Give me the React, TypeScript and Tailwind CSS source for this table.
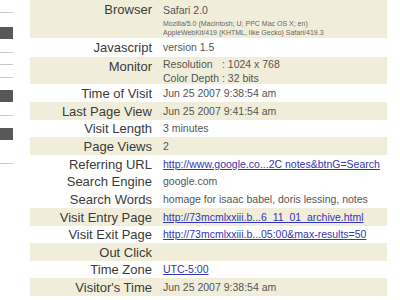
import React from "react";

type Item = {
  label: string;
  beige?: boolean;
  h: string;
  multi?: boolean;
  value: React.ReactNode;
};

const link = "text-[#3434b4] underline";

const rows: Item[] = [
  {
    label: "Browser",
    beige: true,
    h: "h-[38px]",
    multi: true,
    value: (
      <div className="pt-[4px]">
        <div className="text-[10.5px] leading-[13px]">Safari 2.0</div>
        <div className="mt-[2px] whitespace-nowrap text-[7px] leading-[9px] text-[#666]">
          <div>Mozilla/5.0 (Macintosh; U; PPC Mac OS X; en)</div>
          <div>AppleWebKit/419 (KHTML, like Gecko) Safari/419.3</div>
        </div>
      </div>
    ),
  },
  { label: "Javascript", h: "h-[19px]", value: "version 1.5" },
  {
    label: "Monitor",
    beige: true,
    h: "h-[27px]",
    multi: true,
    value: (
      <div className="whitespace-nowrap text-[10.5px] leading-[14px]">
        <div className="flex">
          <span className="w-[59px] shrink-0 whitespace-nowrap">Resolution</span>
          <span>: 1024 x 768</span>
        </div>
        <div className="flex">
          <span className="w-[59px] shrink-0 whitespace-nowrap">Color Depth</span>
          <span>: 32 bits</span>
        </div>
      </div>
    ),
  },
  { label: "Time of Visit", h: "h-[18px]", value: "Jun 25 2007 9:38:54 am" },
  { label: "Last Page View", beige: true, h: "h-[18px]", value: "Jun 25 2007 9:41:54 am" },
  { label: "Visit Length", h: "h-[17px]", value: "3 minutes" },
  { label: "Page Views", beige: true, h: "h-[18px]", value: "2" },
  {
    label: "Referring URL",
    h: "h-[18px]",
    value: <span className={link}>http://www.google.co...2C notes&amp;btnG=Search</span>,
  },
  { label: "Search Engine", h: "h-[17px]", value: "google.com" },
  { label: "Search Words", h: "h-[18px]", value: "homage for isaac babel, doris lessing, notes" },
  {
    label: "Visit Entry Page",
    beige: true,
    h: "h-[18px]",
    value: <span className={link}>http://73mcmlxxiii.b...6_11_01_archive.html</span>,
  },
  {
    label: "Visit Exit Page",
    h: "h-[17px]",
    value: <span className={link}>http://73mcmlxxiii.b...05:00&amp;max-results=50</span>,
  },
  { label: "Out Click", beige: true, h: "h-[18px]", value: "" },
  { label: "Time Zone", h: "h-[17px]", value: <span className={link}>UTC-5:00</span> },
  { label: "Visitor's Time", beige: true, h: "h-[18px]", value: "Jun 25 2007 9:38:54 am" },
  { label: "Visit Number", h: "h-[18px]", value: "" },
];

function Row({ item }: { item: Item }) {
  const bg = item.beige ? "bg-[#f0eedb]" : "bg-white";
  if (item.multi) {
    return (
      <div className={`flex shrink-0 ${item.h} ${bg}`}>
        <div className="w-[125px] shrink-0 pr-[3px] pt-[2px] text-right text-[13px] leading-[15px] text-[#3a3a3a]">
          {item.label}
        </div>
        <div className="flex-1 pl-[8px] text-[#555]">{item.value}</div>
      </div>
    );
  }
  return (
    <div className={`flex shrink-0 items-center ${item.h} ${bg}`}>
      <div className="w-[125px] shrink-0 pr-[3px] text-right text-[13px] leading-[15px] text-[#3a3a3a]">
        {item.label}
      </div>
      <div className="flex-1 whitespace-nowrap pl-[8px] text-[10.5px] leading-[13px] text-[#555]">
        {item.value}
      </div>
    </div>
  );
}

function Sidebar() {
  const line = "h-px w-[13px] bg-[#c8c8c8]";
  const bar = "h-[12px] w-[13px] bg-[#585858]";
  return (
    <div className="flex w-[30px] shrink-0 flex-col">
      <div className={`mt-[12px] ${line}`} />
      <div className={`mt-[14px] ${bar}`} />
      <div className={`mt-[13px] ${line}`} />
      <div className={`mt-[11px] ${line}`} />
      <div className={`mt-[12px] ${line}`} />
      <div className={`mt-[12px] ${bar}`} />
      <div className={`mt-[13px] ${line}`} />
      <div className={`mt-[12px] ${bar}`} />
      <div className={`mt-[23px] ${line}`} />
    </div>
  );
}

export default function App() {
  return (
    <div className="flex h-[300px] w-[400px] overflow-hidden bg-white font-['Liberation_Sans',Arial,sans-serif]">
      <Sidebar />
      <div className="flex w-[357px] shrink-0 flex-col">
        {rows.map((r) => (
          <Row key={r.label} item={r} />
        ))}
      </div>
    </div>
  );
}
